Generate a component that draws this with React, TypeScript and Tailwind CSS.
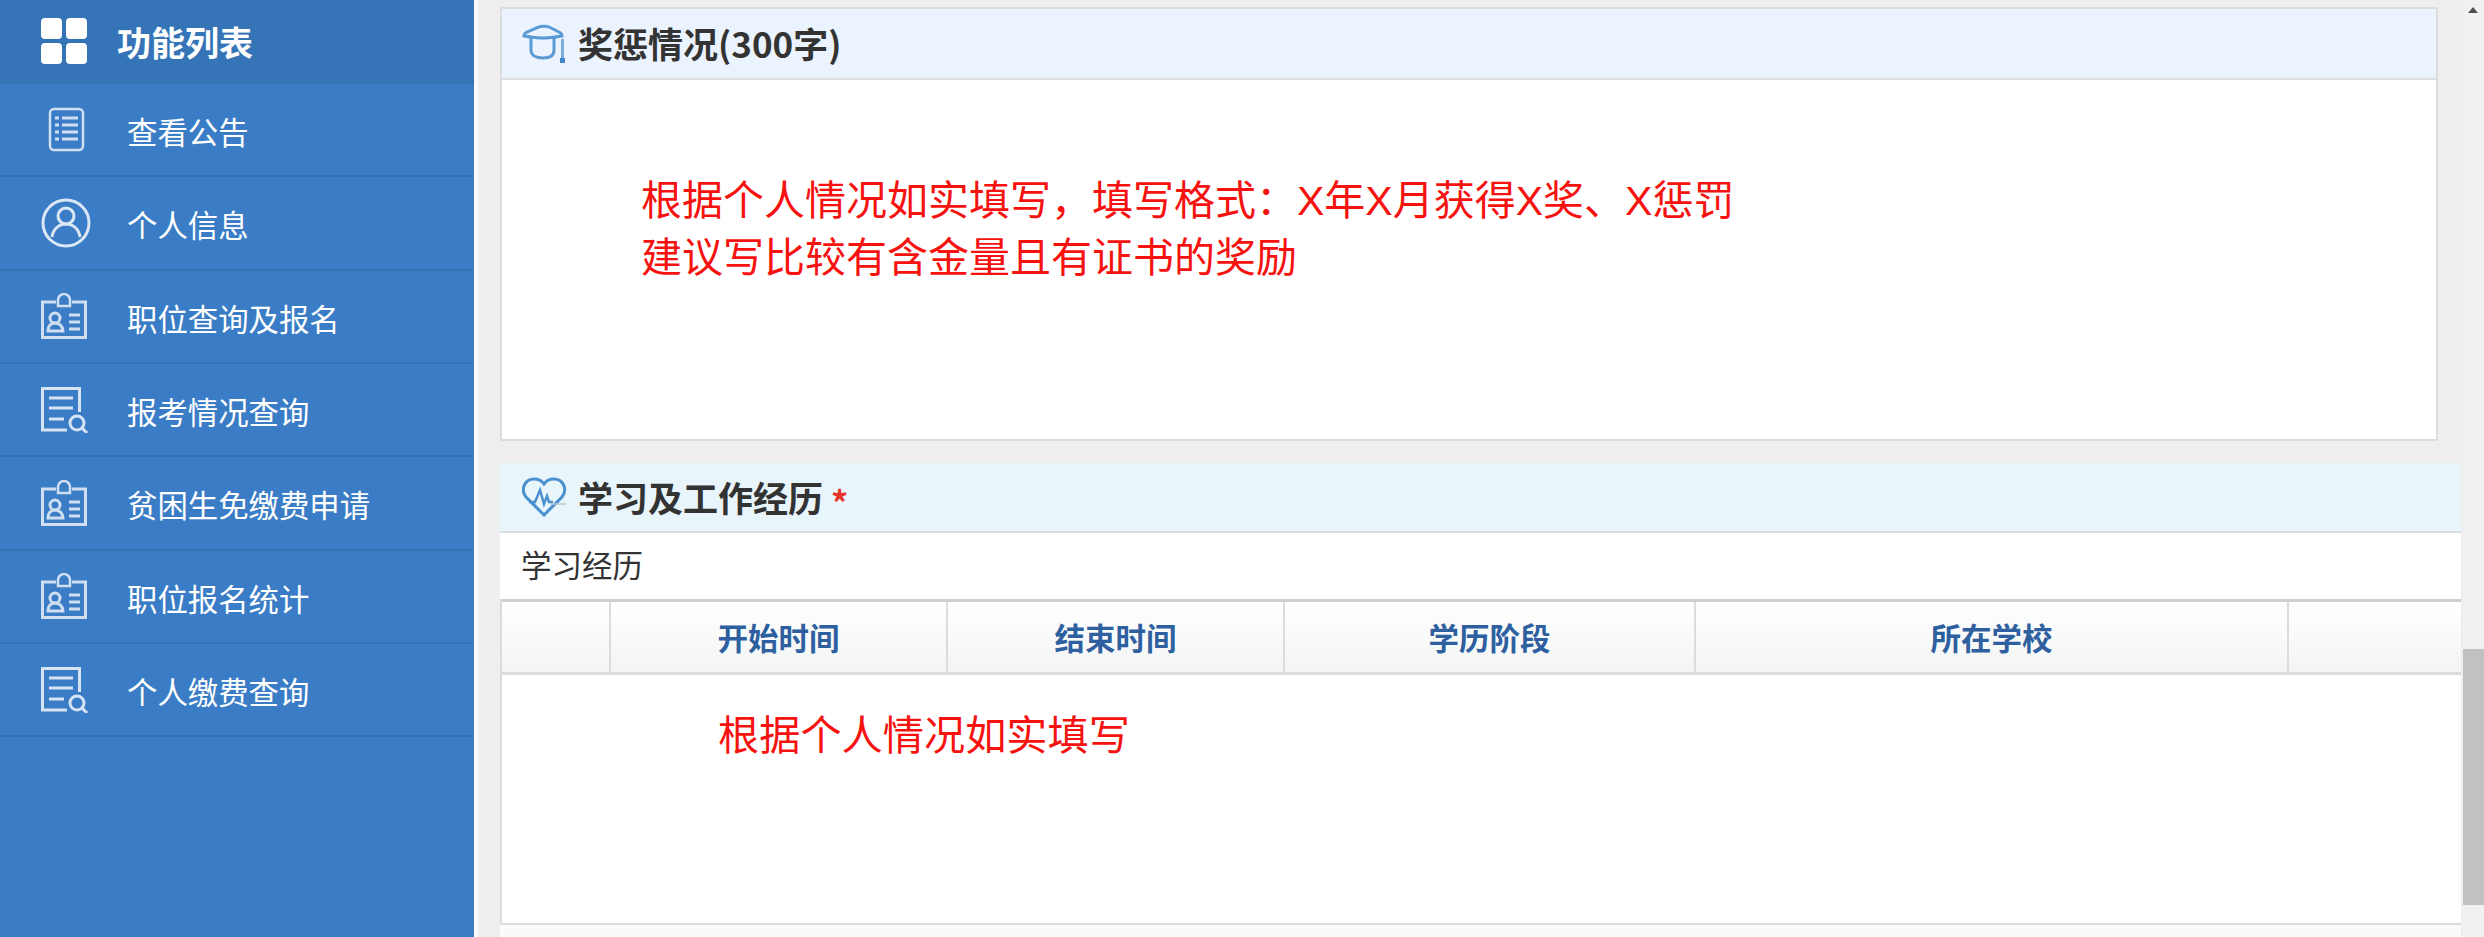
import React from 'react';

const Grid = () => (
  <svg width="46" height="46" viewBox="0 0 46 46" fill="#fff">
    <rect x="0" y="0" width="21" height="21" rx="4" />
    <rect x="25" y="0" width="21" height="21" rx="4" />
    <rect x="0" y="25" width="21" height="21" rx="4" />
    <rect x="25" y="25" width="21" height="21" rx="4" />
  </svg>
);

const Notice = () => (
  <svg width="50" height="46" viewBox="0 0 50 46" fill="none" stroke="#cfdff1" strokeWidth="2.5">
    <rect x="9" y="2" width="33" height="41" rx="4" />
    <path d="M14 11h4M21 11h16M14 18h4M21 18h16M14 25h4M21 25h16M14 32h4M21 32h16" strokeWidth="3" />
  </svg>
);

const User = () => (
  <svg width="50" height="50" viewBox="0 0 50 50" fill="none" stroke="#dbe7f5" strokeWidth="3">
    <circle cx="25" cy="25" r="23" />
    <circle cx="25" cy="18" r="8" />
    <path d="M11 39c1-8 7-13 14-13s13 5 14 13" />
  </svg>
);

const Badge = () => (
  <svg width="50" height="46" viewBox="0 0 50 46" fill="none" stroke="#cfdff1" strokeWidth="3">
    <path d="M15 9H1.5v35.5h43V9H31" />
    <path d="M17 13V7a6 6 0 0 1 12 0v6z" strokeWidth="2.5" />
    <path d="M14 20a5 5 0 1 1 0 10 5 5 0 1 1 0-10z" />
    <path d="M7 38c0-5 3-8 7-8s8 3 8 8z" />
    <path d="M28 22h11M28 29h11M28 36h11" />
  </svg>
);

const DocSearch = () => (
  <svg width="50" height="46" viewBox="0 0 50 46" fill="none" stroke="#d5e3f3" strokeWidth="3">
    <path d="M26 43H1.5V1.5h37V25" />
    <path d="M8 11h24M8 21h24M8 32h15" />
    <circle cx="36" cy="36" r="7" />
    <path d="M41 41l5 5" />
  </svg>
);

const Cap = () => (
  <svg width="44" height="40" viewBox="0 0 44 40" fill="none" stroke="#5b9bd5" strokeWidth="3">
    <path d="M2 12c0-2 1-3 3-4l12-5c2-1 8-1 10 0l10 5c2 1 3 2 3 4-6 1-12 2-19 2S8 13 2 12z" />
    <path d="M9 14v12c0 6 6 8 12 8s11-2 11-8V14" />
    <rect x="39" y="15" width="3" height="19" fill="#7badde" stroke="none" />
    <rect x="38" y="34" width="5" height="5" fill="#3f86cf" stroke="none" />
  </svg>
);

const Heart = () => (
  <svg width="46" height="40" viewBox="0 0 46 40" fill="none" stroke="#4a90cf" strokeWidth="3">
    <path d="M22 38 4 20C-2 12 3 2 12 2c5 0 8 2 10 5 2-3 5-5 10-5 9 0 14 10 8 18z" />
    <path d="M7 25h6l5-12 4 14 3-8 2 6h4" strokeWidth="2.5" />
    <path d="M28 27h16" stroke="#b8c4cf" strokeWidth="1.5" />
  </svg>
);

const menu = [
  { label: '查看公告', icon: <Notice /> },
  { label: '个人信息', icon: <User /> },
  { label: '职位查询及报名', icon: <Badge /> },
  { label: '报考情况查询', icon: <DocSearch /> },
  { label: '贫困生免缴费申请', icon: <Badge /> },
  { label: '职位报名统计', icon: <Badge /> },
  { label: '个人缴费查询', icon: <DocSearch /> },
];

const columns = [
  { label: '', w: 'w-[109px]' },
  { label: '开始时间', w: 'w-[337px]' },
  { label: '结束时间', w: 'w-[337px]' },
  { label: '学历阶段', w: 'w-[411px]' },
  { label: '所在学校', w: 'w-[593px]' },
  { label: '', w: 'flex-1' },
];

const App: React.FC = () => {
  return (
    <div className="flex h-[937px] w-[2484px] overflow-hidden bg-[#eeeeee] font-['Noto_Sans_CJK_SC',sans-serif]">
      {/* sidebar */}
      <aside className="w-[474px] shrink-0 bg-[#3a7dc6] text-white">
        <div className="flex h-[84px] items-center bg-[#3574b6] pb-[2px] pl-[41px]">
          <Grid />
          <span className="ml-[30px] text-[34px] font-bold">功能列表</span>
        </div>
        {menu.map((m) => (
          <div key={m.label} className="flex h-[93.33px] items-center border-b-2 border-[#3572b4] pl-[41px]">
            <div className="flex w-[86px] shrink-0">{m.icon}</div>
            <span className="pt-[3px] text-[30.4px] leading-none">{m.label}</span>
          </div>
        ))}
      </aside>
      <div className="w-[4px] shrink-0 bg-[#fafafa]" />

      <main className="flex flex-1 flex-col pl-[22px] pt-[7px]">
        {/* 奖惩情况 */}
        <section className="h-[434px] w-[1938px] border-2 border-[#dcdcdc] bg-white">
          <div className="flex h-[71px] items-center border-b-2 border-[#dfdfdf] bg-[#ebf3fe] pl-[20px]">
            <Cap />
            <h2 className="ml-[12px] text-[35px] font-bold text-[#333333]">奖惩情况(300字)</h2>
          </div>
          <div className="pl-[139px] pt-[93px] font-['Liberation_Sans','Noto_Sans_CJK_SC',sans-serif] text-[41px] leading-[57px] text-[#f5120f]">
            <p>根据个人情况如实填写，填写格式：X年X月获得X奖、X惩罚</p>
            <p>建议写比较有含金量且有证书的奖励</p>
          </div>
        </section>

        {/* 学习及工作经历 */}
        <section className="mt-[22px] flex w-[1961px] flex-1 flex-col bg-[#fafafa]">
          <div className="flex h-[70px] shrink-0 items-center border-b-2 border-[#d9dde0] bg-[#e8f6fb] pl-[22px]">
            <Heart />
            <h2 className="ml-[10px] text-[35px] font-bold text-[#333333]">学习及工作经历</h2>
            <span className="ml-[8px] mt-[8px] text-[34px] font-bold text-[#e53528]">*</span>
          </div>
          <div className="flex h-[66px] shrink-0 items-center bg-white pb-[2px] pl-[21px] text-[30.5px] text-[#333333]">
            学习经历
          </div>
          <div className="border-l-2 border-[#dcdcdc] bg-white">
            <div className="flex h-[76px] border-y-[3px] border-[#cfcfcf] border-b-[#dcdcdc] bg-gradient-to-b from-white to-[#f3f5f5]">
              {columns.map((c, i) => (
                <div
                  key={i}
                  className={`${c.w} flex items-center justify-center border-r-2 border-[#dcdcdc] pt-[2px] text-[30.5px] font-bold text-[#2e609f] last:border-r-0`}
                >
                  {c.label}
                </div>
              ))}
            </div>
            <div className="h-[250px] border-b-2 border-[#dcdcdc] pl-[216px] pt-[29px] text-[41.2px] leading-[57px] text-[#f5120f]">
              根据个人情况如实填写
            </div>
          </div>
        </section>
      </main>

      {/* scrollbar */}
      <div className="relative w-[21px] shrink-0 bg-[#f1f1f1]">
        <div className="absolute left-[5px] top-[7px] h-0 w-0 border-x-[5px] border-b-[6px] border-x-transparent border-b-[#505050]" />
        <div className="absolute left-0 top-[649px] h-[256px] w-full bg-[#c1c1c1]" />
      </div>
    </div>
  );
};

export default App;
